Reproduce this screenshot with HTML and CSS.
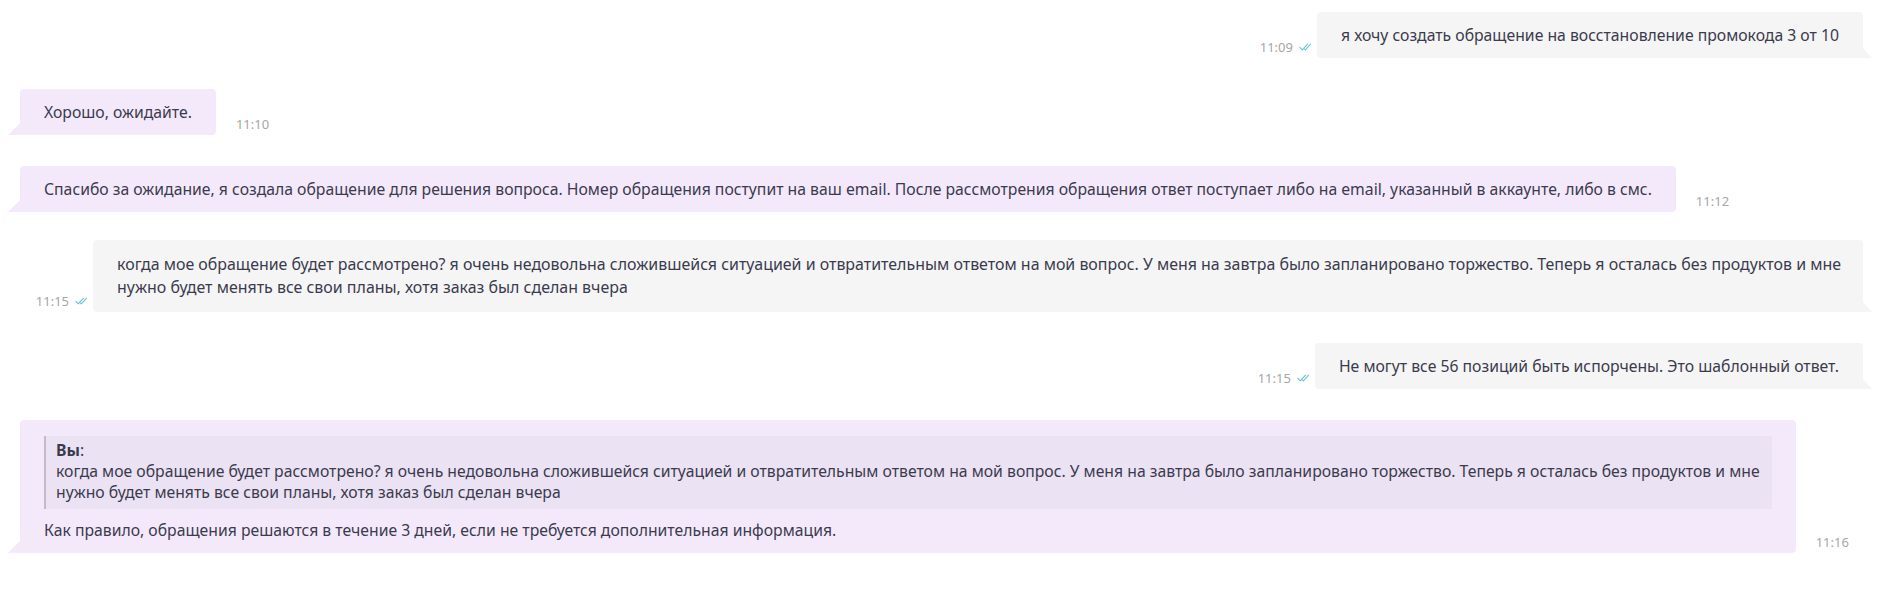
FILE: index.html
```html
<!DOCTYPE html>
<html lang="ru">
<head>
<meta charset="utf-8">
<title>Чат</title>
<link rel="stylesheet" href="styles.css">
</head>
<body>
<div class="chat">
  <div class="row out">
    <span class="meta"><span class="time">11:09</span><svg class="check" viewBox="0 0 13 8" width="13" height="8"><path d="M0.8 4.3 L3.3 6.8 L8.6 1.2 M5.6 6.1 L6.3 6.8 L11.6 1.2"/></svg></span>
    <div class="bubble gray">я хочу создать обращение на восстановление промокода 3 от 10</div>
  </div>
  <div class="row in">
    <div class="bubble lilac">Хорошо, ожидайте.</div>
    <span class="meta"><span class="time">11:10</span></span>
  </div>
  <div class="row in">
    <div class="bubble lilac">Спасибо за ожидание, я создала обращение для решения вопроса. Номер обращения поступит на ваш email. После рассмотрения обращения ответ поступает либо на email, указанный в аккаунте, либо в смс.</div>
    <span class="meta"><span class="time">11:12</span></span>
  </div>
  <div class="row out tight">
    <span class="meta"><span class="time">11:15</span><svg class="check" viewBox="0 0 13 8" width="13" height="8"><path d="M0.8 4.3 L3.3 6.8 L8.6 1.2 M5.6 6.1 L6.3 6.8 L11.6 1.2"/></svg></span>
    <div class="bubble gray two">когда мое обращение будет рассмотрено? я очень недовольна сложившейся ситуацией и отвратительным ответом на мой вопрос. У меня на завтра было запланировано торжество. Теперь я осталась без продуктов и мне<br>нужно будет менять все свои планы, хотя заказ был сделан вчера</div>
  </div>
  <div class="row out">
    <span class="meta"><span class="time">11:15</span><svg class="check" viewBox="0 0 13 8" width="13" height="8"><path d="M0.8 4.3 L3.3 6.8 L8.6 1.2 M5.6 6.1 L6.3 6.8 L11.6 1.2"/></svg></span>
    <div class="bubble gray">Не могут все 56 позиций быть испорчены. Это шаблонный ответ.</div>
  </div>
  <div class="row in">
    <div class="bubble lilac reply">
      <div class="quote"><b>Вы</b>:<br>когда мое обращение будет рассмотрено? я очень недовольна сложившейся ситуацией и отвратительным ответом на мой вопрос. У меня на завтра было запланировано торжество. Теперь я осталась без продуктов и мне<br>нужно будет менять все свои планы, хотя заказ был сделан вчера</div>
      <div class="answer">Как правило, обращения решаются в течение 3 дней, если не требуется дополнительная информация.</div>
    </div>
    <span class="meta"><span class="time">11:16</span></span>
  </div>
</div>
</body>
</html>
```

FILE: styles.css
```css
html, body {
  margin: 0;
  height: 100%;
}
body {
  background: #ffffff;
  font-family: "Noto Sans", "Open Sans", sans-serif;
  color: #3b3b4e;
  overflow: hidden;
}
.chat {
  display: flex;
  flex-direction: column;
  gap: 31px;
  padding: 12px 22px 0 20px;
}
.row {
  display: flex;
  align-items: flex-end;
}
.row.tight {
  margin-top: -3px;
}
.row.out {
  justify-content: flex-end;
  gap: 5px;
}
.row.in {
  justify-content: flex-start;
  gap: 20px;
}
.bubble {
  position: relative;
  font-size: 15.75px;
  line-height: 23px;
  padding: 12px 24px 11px;
  border-radius: 4px;
}
.gray.two {
  font-size: 15.95px;
  padding: 13px 22px 13px 24px;
}
.lilac {
  background: #f4e9fb;
  border-bottom-left-radius: 0;
}
.lilac::before {
  content: "";
  position: absolute;
  left: -12px;
  bottom: 0;
  width: 0;
  height: 0;
  border-bottom: 12px solid #f4e9fb;
  border-left: 12px solid transparent;
}
.gray {
  background: #f5f5f5;
  border-bottom-right-radius: 0;
}
.gray::after {
  content: "";
  position: absolute;
  right: -9px;
  bottom: 0;
  width: 0;
  height: 0;
  border-bottom: 10px solid #f5f5f5;
  border-right: 9px solid transparent;
}
.meta {
  display: flex;
  align-items: center;
  gap: 6px;
  margin-bottom: 3px;
  font-size: 13px;
  line-height: 16px;
  color: #a6a6a6;
  white-space: nowrap;
}
.check {
  fill: none;
  stroke: #6cc0d6;
  stroke-width: 1.1;
  stroke-linecap: round;
  stroke-linejoin: round;
}
.reply {
  padding: 16px 24px 11px;
}
.quote {
  background: #ebe2f4;
  border-left: 2px solid #c2bac8;
  padding: 4px 12px 6px 10px;
  line-height: 21px;
}
.quote b {
  font-weight: 700;
}
.answer {
  margin-top: 10px;
}
```
